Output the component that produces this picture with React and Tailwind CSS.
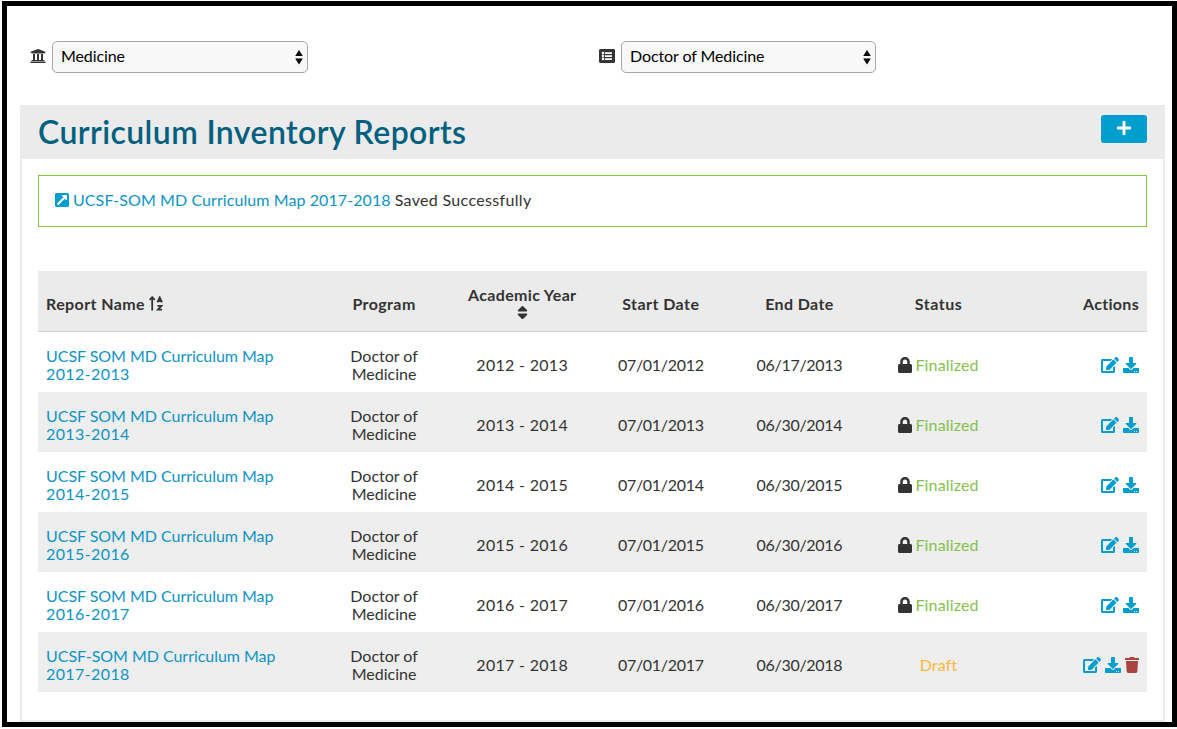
import {
  FaUniversity, FaListAlt, FaExternalLinkSquareAlt, FaPlus, FaSort, FaLock, FaEdit, FaDownload, FaTrash,
} from 'react-icons/fa';

const reports = [
  { name: 'UCSF SOM MD Curriculum Map', year: '2012-2013', academic: '2012 - 2013', start: '07/01/2012', end: '06/17/2013' },
  { name: 'UCSF SOM MD Curriculum Map', year: '2013-2014', academic: '2013 - 2014', start: '07/01/2013', end: '06/30/2014' },
  { name: 'UCSF SOM MD Curriculum Map', year: '2014-2015', academic: '2014 - 2015', start: '07/01/2014', end: '06/30/2015' },
  { name: 'UCSF SOM MD Curriculum Map', year: '2015-2016', academic: '2015 - 2016', start: '07/01/2015', end: '06/30/2016' },
  { name: 'UCSF SOM MD Curriculum Map', year: '2016-2017', academic: '2016 - 2017', start: '07/01/2016', end: '06/30/2017' },
  { name: 'UCSF-SOM MD Curriculum Map', year: '2017-2018', academic: '2017 - 2018', start: '07/01/2017', end: '06/30/2018', draft: true },
];

function Select({ label, className }) {
  return (
    <button className={`flex h-8 items-center justify-between rounded-[5px] border border-[#a6a6a6] bg-[#f8f8f8] pr-1 pl-2 text-black ${className}`}>
      <span className="pb-[2px] tracking-[-0.1px]">{label}</span>
      <svg viewBox="0 0 8 16" className="h-4 w-2" fill="currentColor">
        <path d="M4 1 7.8 7H.2ZM.2 9.5h7.6L4 15.5Z" />
      </svg>
    </button>
  );
}

function SortAlphaUp() {
  return (
    <svg viewBox="0 0 14 15" className="h-[15px] w-[14px]" fill="none" stroke="currentColor">
      <path d="M3.2 14.5V2M.6 3.8 3.2 1.2l2.6 2.6" strokeWidth="1.8" />
      <path d="M8.4 6.4 10.7 1.4 13 6.4M9.2 5h3" strokeWidth="1.8" />
      <path d="M8.5 9.8h3.9L8.9 13.6h4.1" strokeWidth="1.8" />
    </svg>
  );
}

function ReportRow({ report }) {
  return (
    <div className="grid h-15 grid-cols-8 items-center pt-[6px] text-center odd:bg-white even:bg-[#eeeeee]">
      <a className="col-span-2 px-2 text-left text-[#0f93c4]">
        <div className="tracking-[-0.04px]">{report.name}</div>
        <div className="tracking-[0.4px]">{report.year}</div>
      </a>
      <div className="pr-px tracking-[0px]">Doctor of<br />Medicine</div>
      <div className="pr-[2px] tracking-[0.3px]">{report.academic}</div>
      <div className="pr-[2px] tracking-[-0.3px]">{report.start}</div>
      <div className="pr-[2px] tracking-[-0.3px]">{report.end}</div>
      {report.draft ? (
        <div className="pr-px text-[#ffb73b]">Draft</div>
      ) : (
        <div className="flex items-center justify-center gap-[3px] pr-px">
          <FaLock className="h-4 w-[14px]" />
          <span className="tracking-[0.15px] text-[#84c14c]">Finalized</span>
        </div>
      )}
      <div className="flex items-center justify-end gap-1 pr-2 text-[#009dcf]">
        <FaEdit className="h-4 w-[18px]" />
        <FaDownload className="h-4 w-4" />
        {report.draft && <FaTrash className="h-4 w-[14px] text-[#a9443f]" />}
      </div>
    </div>
  );
}

export default function App() {
  return (
    <div className="h-[729px] w-[1177px] bg-white pt-px pl-[2px] font-['Lato',sans-serif] text-base leading-[18px] tracking-[0.2px] text-[#333333]">
      <div className="flex h-[726px] flex-col border-5 border-black">
        <div className="flex h-[99px] shrink-0 items-start pt-[35px] pl-[23px]">
          <div className="flex w-[569px] items-center gap-[6px]">
            <FaUniversity className="mb-[2px] h-4 w-4" />
            <Select label="Medicine" className="w-[256px]" />
          </div>
          <div className="flex items-center gap-[6px]">
            <FaListAlt className="mb-[2px] h-4 w-4" />
            <Select label="Doctor of Medicine" className="w-[255px]" />
          </div>
        </div>
        <section className="mr-[7px] ml-[13px] flex-1 border-2 border-[#ebebeb]">
          <header className="flex h-[52px] items-center justify-between bg-[#ebebeb] pr-4 pl-4">
            <h1 className="pb-[2px] text-[32px] leading-10 font-semibold tracking-[0.4px] text-[#00607f]">Curriculum Inventory Reports</h1>
            <button className="mb-2 flex h-7 w-[46px] items-center justify-center rounded-[3px] bg-[#009dcf] pb-[2px] text-white">
              <FaPlus className="h-4 w-[14px]" />
            </button>
          </header>
          <div className="px-4 pt-4">
            <div className="flex h-[52px] items-center border border-[#84c441] px-4 pb-[2px]">
              <FaExternalLinkSquareAlt className="mr-1 h-4 w-[14px] text-[#009dcf]" />
              <a className="mr-1 tracking-[0.08px] text-[#0f93c4]">UCSF-SOM MD Curriculum Map 2017-2018</a>
              <span className="tracking-[0.33px]">Saved Successfully</span>
            </div>
            <div className="mt-11">
              <div className="grid h-[61px] grid-cols-8 items-center border-b border-[#d2d2d2] bg-[#ebebeb] pt-[5px] text-center font-bold tracking-[0.3px]">
                <div className="col-span-2 flex items-center gap-1 pl-2 text-left">
                  <span className="tracking-[0.4px]">Report Name</span>
                  <SortAlphaUp />
                </div>
                <div className="pr-px tracking-[0.4px]">Program</div>
                <div className="flex flex-col items-center pr-[2px] pb-px">
                  <span className="tracking-[0.35px]">Academic Year</span>
                  <FaSort className="h-[17px] w-[11px]" />
                </div>
                <div className="pr-[2px] tracking-[0.45px]">Start Date</div>
                <div className="pr-[2px] tracking-[0.4px]">End Date</div>
                <div className="pr-px tracking-[0.5px]">Status</div>
                <div className="pr-2 text-right">Actions</div>
              </div>
              <div>
                {reports.map((report) => <ReportRow key={report.year} report={report} />)}
              </div>
            </div>
          </div>
        </section>
      </div>
    </div>
  );
}
